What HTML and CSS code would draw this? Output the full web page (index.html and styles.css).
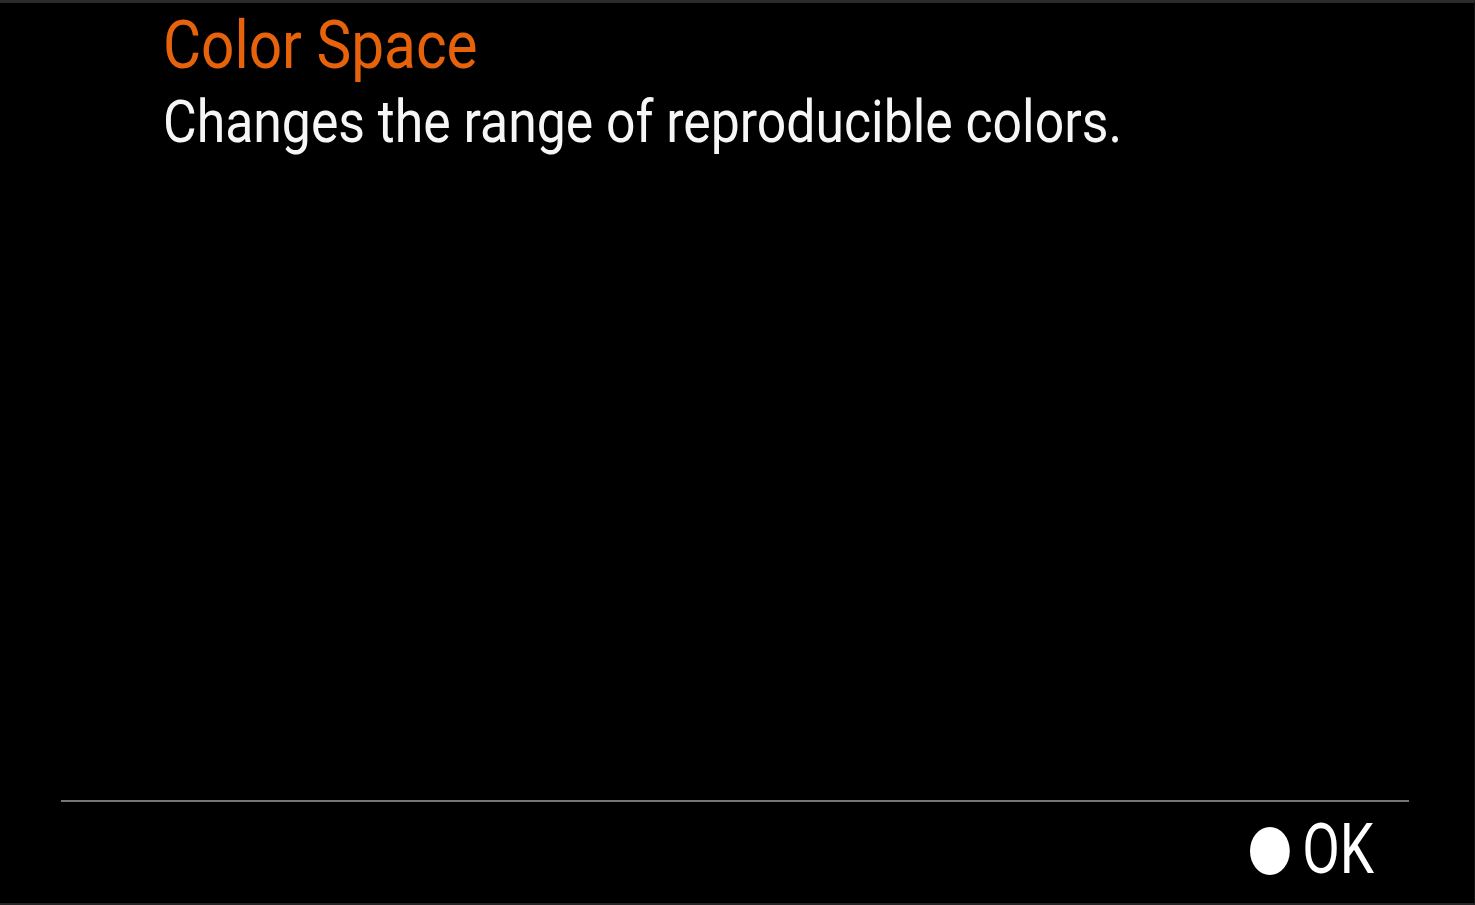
FILE: index.html
```html
<!DOCTYPE html>
<html lang="en">
<head>
<meta charset="utf-8">
<title>Color Space</title>
<link rel="stylesheet" href="styles.css">
</head>
<body>
<div class="screen">
  <header class="help">
    <h1 class="title"><span class="squeeze title-text">Color Space</span></h1>
    <p class="desc"><span class="squeeze desc-text">Changes the range of reproducible colors.</span></p>
  </header>
  <div class="spacer"></div>
  <div class="divider"></div>
  <footer class="footer">
    <div class="ok-group">
      <span class="dot"></span>
      <span class="ok">OK</span>
    </div>
  </footer>
</div>
</body>
</html>
```

FILE: styles.css
```css
html, body {
  margin: 0;
  padding: 0;
  background: #000;
}

body {
  font-family: Roboto, "Liberation Sans", sans-serif;
  color: #f4f4f4;
  overflow: hidden;
}

.screen {
  width: 1475px;
  height: 905px;
  box-sizing: border-box;
  border-top: 3px solid #2b2b2b;
  border-bottom: 2px solid #262626;
  border-right: 1px solid #161616;
  display: flex;
  flex-direction: column;
  background: #000;
}

.help {
  padding: 10px 0 0 163px;
}

.title {
  margin: 0;
  font-size: 66px;
  line-height: 66px;
  font-weight: 400;
  color: #e6620b;
  white-space: nowrap;
}

.desc {
  margin: 13px 0 0 0;
  font-size: 60px;
  line-height: 60px;
  font-weight: 400;
  color: #f6f6f6;
  white-space: nowrap;
}

.squeeze {
  display: inline-block;
  transform-origin: left center;
}

.title-text {
  transform: scaleX(0.887);
}

.desc-text {
  transform: scaleX(0.862);
}

.spacer {
  flex: 1;
}

.divider {
  height: 2px;
  flex: none;
  margin: 0 65px 0 61px;
  background: #767676;
}

.footer {
  display: flex;
  justify-content: flex-end;
  padding: 12px 100px 0 0;
  height: 101px;
  flex: none;
  box-sizing: border-box;
}

.ok-group {
  display: flex;
  align-items: flex-start;
  transform: scaleX(0.78);
  transform-origin: right center;
}

.dot {
  width: 51px;
  height: 48px;
  margin-top: 13px;
  margin-right: 16px;
  border-radius: 50%;
  background: #fff;
}

.ok {
  font-size: 70px;
  line-height: 70px;
  font-weight: 400;
  color: #fff;
}
```
